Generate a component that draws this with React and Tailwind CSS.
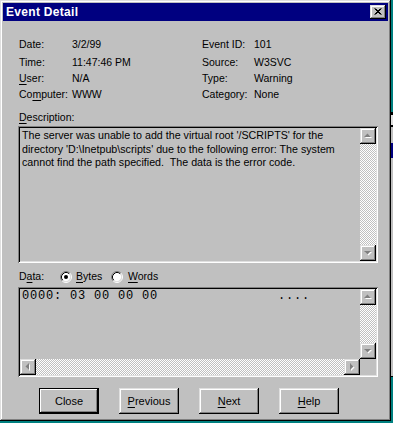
import React from "react";

const raised =
  "shadow-[inset_-1px_-1px_#000,inset_1px_1px_#dfdfdf,inset_-2px_-2px_#808080,inset_2px_2px_#fff]";
const sunken =
  "shadow-[inset_1px_1px_#808080,inset_-1px_-1px_#fff,inset_2px_2px_#000,inset_-2px_-2px_#dfdfdf]";
const dither =
  "bg-[repeating-conic-gradient(#fff_0_25%,#c0c0c0_0_50%)] bg-[length:2px_2px]";

function Arrow({ dir }) {
  // greyed-out win95 arrow: grey triangle with a white shadow
  const shapes = {
    up: "M4 9 L7.5 5.5 L11 9 Z",
    down: "M4 6 L11 6 L7.5 9.5 Z",
    left: "M9 4 L9 11 L5.5 7.5 Z",
    right: "M6 4 L9.5 7.5 L6 11 Z",
  };
  return (
    <svg width="16" height="16" viewBox="0 0 16 16" className="block">
      <path d={shapes[dir]} fill="#fff" transform="translate(1 1)" />
      <path d={shapes[dir]} fill="#808080" />
    </svg>
  );
}

function ScrollBtn({ dir }) {
  return (
    <div className={`w-[16px] h-[16px] shrink-0 bg-[#c0c0c0] ${raised}`}>
      <Arrow dir={dir} />
    </div>
  );
}

function Radio({ checked }) {
  return (
    <svg width="12" height="12" viewBox="0 0 12 12" className="block">
      <circle cx="6" cy="6" r="4.5" fill="#fff" />
      <path d="M9.89 2.11 A5.5 5.5 0 0 0 2.11 9.89" stroke="#808080" fill="none" />
      <path d="M2.11 9.89 A5.5 5.5 0 0 0 9.89 2.11" stroke="#fff" fill="none" />
      <path d="M9.18 2.82 A4.5 4.5 0 0 0 2.82 9.18" stroke="#000" fill="none" />
      <path d="M2.82 9.18 A4.5 4.5 0 0 0 9.18 2.82" stroke="#dfdfdf" fill="none" />
      {checked && <circle cx="6" cy="6" r="2" fill="#000" />}
    </svg>
  );
}

function Button({ children, isDefault }) {
  return (
    <div
      className={`w-[60px] h-[26px] flex items-center justify-center bg-[#c0c0c0] ${
        isDefault
          ? "shadow-[inset_0_0_0_1px_#000,inset_-2px_-2px_#000,inset_2px_2px_#fff,inset_-3px_-3px_#808080]"
          : raised
      }`}
    >
      {children}
    </div>
  );
}

const U = ({ children }) => <span className="underline underline-offset-[2px]">{children}</span>;

export default function App() {
  return (
    <div className="w-[393px] h-[423px] bg-[#008080] flex flex-col overflow-hidden font-['Liberation_Sans',Arial,sans-serif] text-[10.5px] text-black">
      <div className="flex">
        <div className="w-[391px] h-[421px] bg-[#c0c0c0] p-[3px] shadow-[inset_-1px_-1px_#000,inset_1px_1px_#dfdfdf,inset_-2px_-2px_#808080,inset_2px_2px_#fff] flex flex-col">
          {/* title bar */}
          <div className="h-[18px] bg-[#000080] flex items-center justify-between pl-[3px] pr-[2px]">
            <span className="text-white font-bold text-[12px] leading-none tracking-[0.3px]">Event Detail</span>
            <div className={`w-[16px] h-[14px] bg-[#c0c0c0] ${raised} flex items-center justify-center`}>
              <svg width="16" height="14" viewBox="0 0 16 14" className="block">
                <path d="M4.5 3.5 L10.5 9.5 M10.5 3.5 L4.5 9.5 M5.5 3.5 L11.5 9.5 M11.5 3.5 L5.5 9.5" stroke="#000" strokeWidth="1" />
              </svg>
            </div>
          </div>

          <div className="pl-[15px] flex flex-col">
            {/* info grid */}
            <div className="mt-[15px] pl-[1px] grid grid-cols-[53px_130px_52px_1fr] leading-[16px]">
              <span>Date:</span>
              <span>3/2/99</span>
              <span>Event ID:</span>
              <span>101</span>
              <span className="mt-[2px]">Time:</span>
              <span className="mt-[2px]">11:47:46 PM</span>
              <span className="mt-[2px]">Source:</span>
              <span className="mt-[2px]">W3SVC</span>
              <span><U>U</U>ser:</span>
              <span>N/A</span>
              <span>Type:</span>
              <span>Warning</span>
              <span>Co<U>m</U>puter:</span>
              <span>WWW</span>
              <span>Category:</span>
              <span>None</span>
            </div>

            <div className="mt-[7px] pl-[1px] leading-[16px]">
              <U>D</U>escription:
            </div>

            {/* description box */}
            <div className={`mt-[1px] w-[360px] h-[137px] p-[2px] flex ${sunken}`}>
              <div className="flex-1 pl-[2px] pt-[1px] text-[10.7px] leading-[13.5px] whitespace-pre">
                <div>The server was unable to add the virtual root '/SCRIPTS' for the</div>
                <div>directory 'D:\Inetpub\scripts' due to the following error: The system</div>
                <div>cannot find the path specified.  The data is the error code.</div>
              </div>
              <div className="w-[16px] flex flex-col">
                <ScrollBtn dir="up" />
                <div className={`flex-1 ${dither}`} />
                <ScrollBtn dir="down" />
              </div>
            </div>

            {/* data options */}
            <div className="mt-[6px] pl-[1px] h-[16px] flex items-center">
              <span className="w-[41px]">
                D<U>a</U>ta:
              </span>
              <Radio checked />
              <span className="ml-[4px] w-[35px]">
                <U>B</U>ytes
              </span>
              <Radio />
              <span className="ml-[5px]">
                <U>W</U>ords
              </span>
            </div>

            {/* data box */}
            <div className={`mt-[2px] w-[360px] h-[90px] p-[2px] flex flex-col ${sunken}`}>
              <div className="flex flex-1">
                <div className="flex-1 pl-[2px] font-['Liberation_Mono',monospace] text-[12px] leading-[14px] tracking-[0.8px] whitespace-pre">
                  {"0000: 03 00 00 00               ...."}
                </div>
                <div className="w-[16px] flex flex-col">
                  <ScrollBtn dir="up" />
                  <div className={`flex-1 ${dither}`} />
                  <ScrollBtn dir="down" />
                </div>
              </div>
              <div className="h-[16px] flex">
                <ScrollBtn dir="left" />
                <div className={`flex-1 ${dither}`} />
                <ScrollBtn dir="right" />
                <div className="w-[16px] bg-[#c0c0c0]" />
              </div>
            </div>

            {/* buttons */}
            <div className="mt-[11px] pl-[21px] flex gap-[20px] text-[11px]">
              <Button isDefault>Close</Button>
              <Button>
                <span><U>P</U>revious</span>
              </Button>
              <Button>
                <span><U>N</U>ext</span>
              </Button>
              <Button>
                <span><U>H</U>elp</span>
              </Button>
            </div>
          </div>
        </div>

        {/* sliver of the desktop and the window behind */}
        <div className="w-[2px] flex flex-col">
          <div className="h-[112px] bg-[#008080]" />
          <div className="h-[3px] bg-black" />
          <div className="h-[10px] bg-[#dfdfdf]" />
          <div className="h-[2px] bg-black" />
          <div className="h-[16px] bg-[#c0c0c0]" />
          <div className="h-[15px] bg-[#000080]" />
          <div className="h-[218px] bg-[#c0c0c0]" />
          <div className="h-[1px] bg-black" />
          <div className="flex-1 bg-[#008080]" />
        </div>
      </div>
      <div className="flex-1 bg-[#008080]" />
    </div>
  );
}
